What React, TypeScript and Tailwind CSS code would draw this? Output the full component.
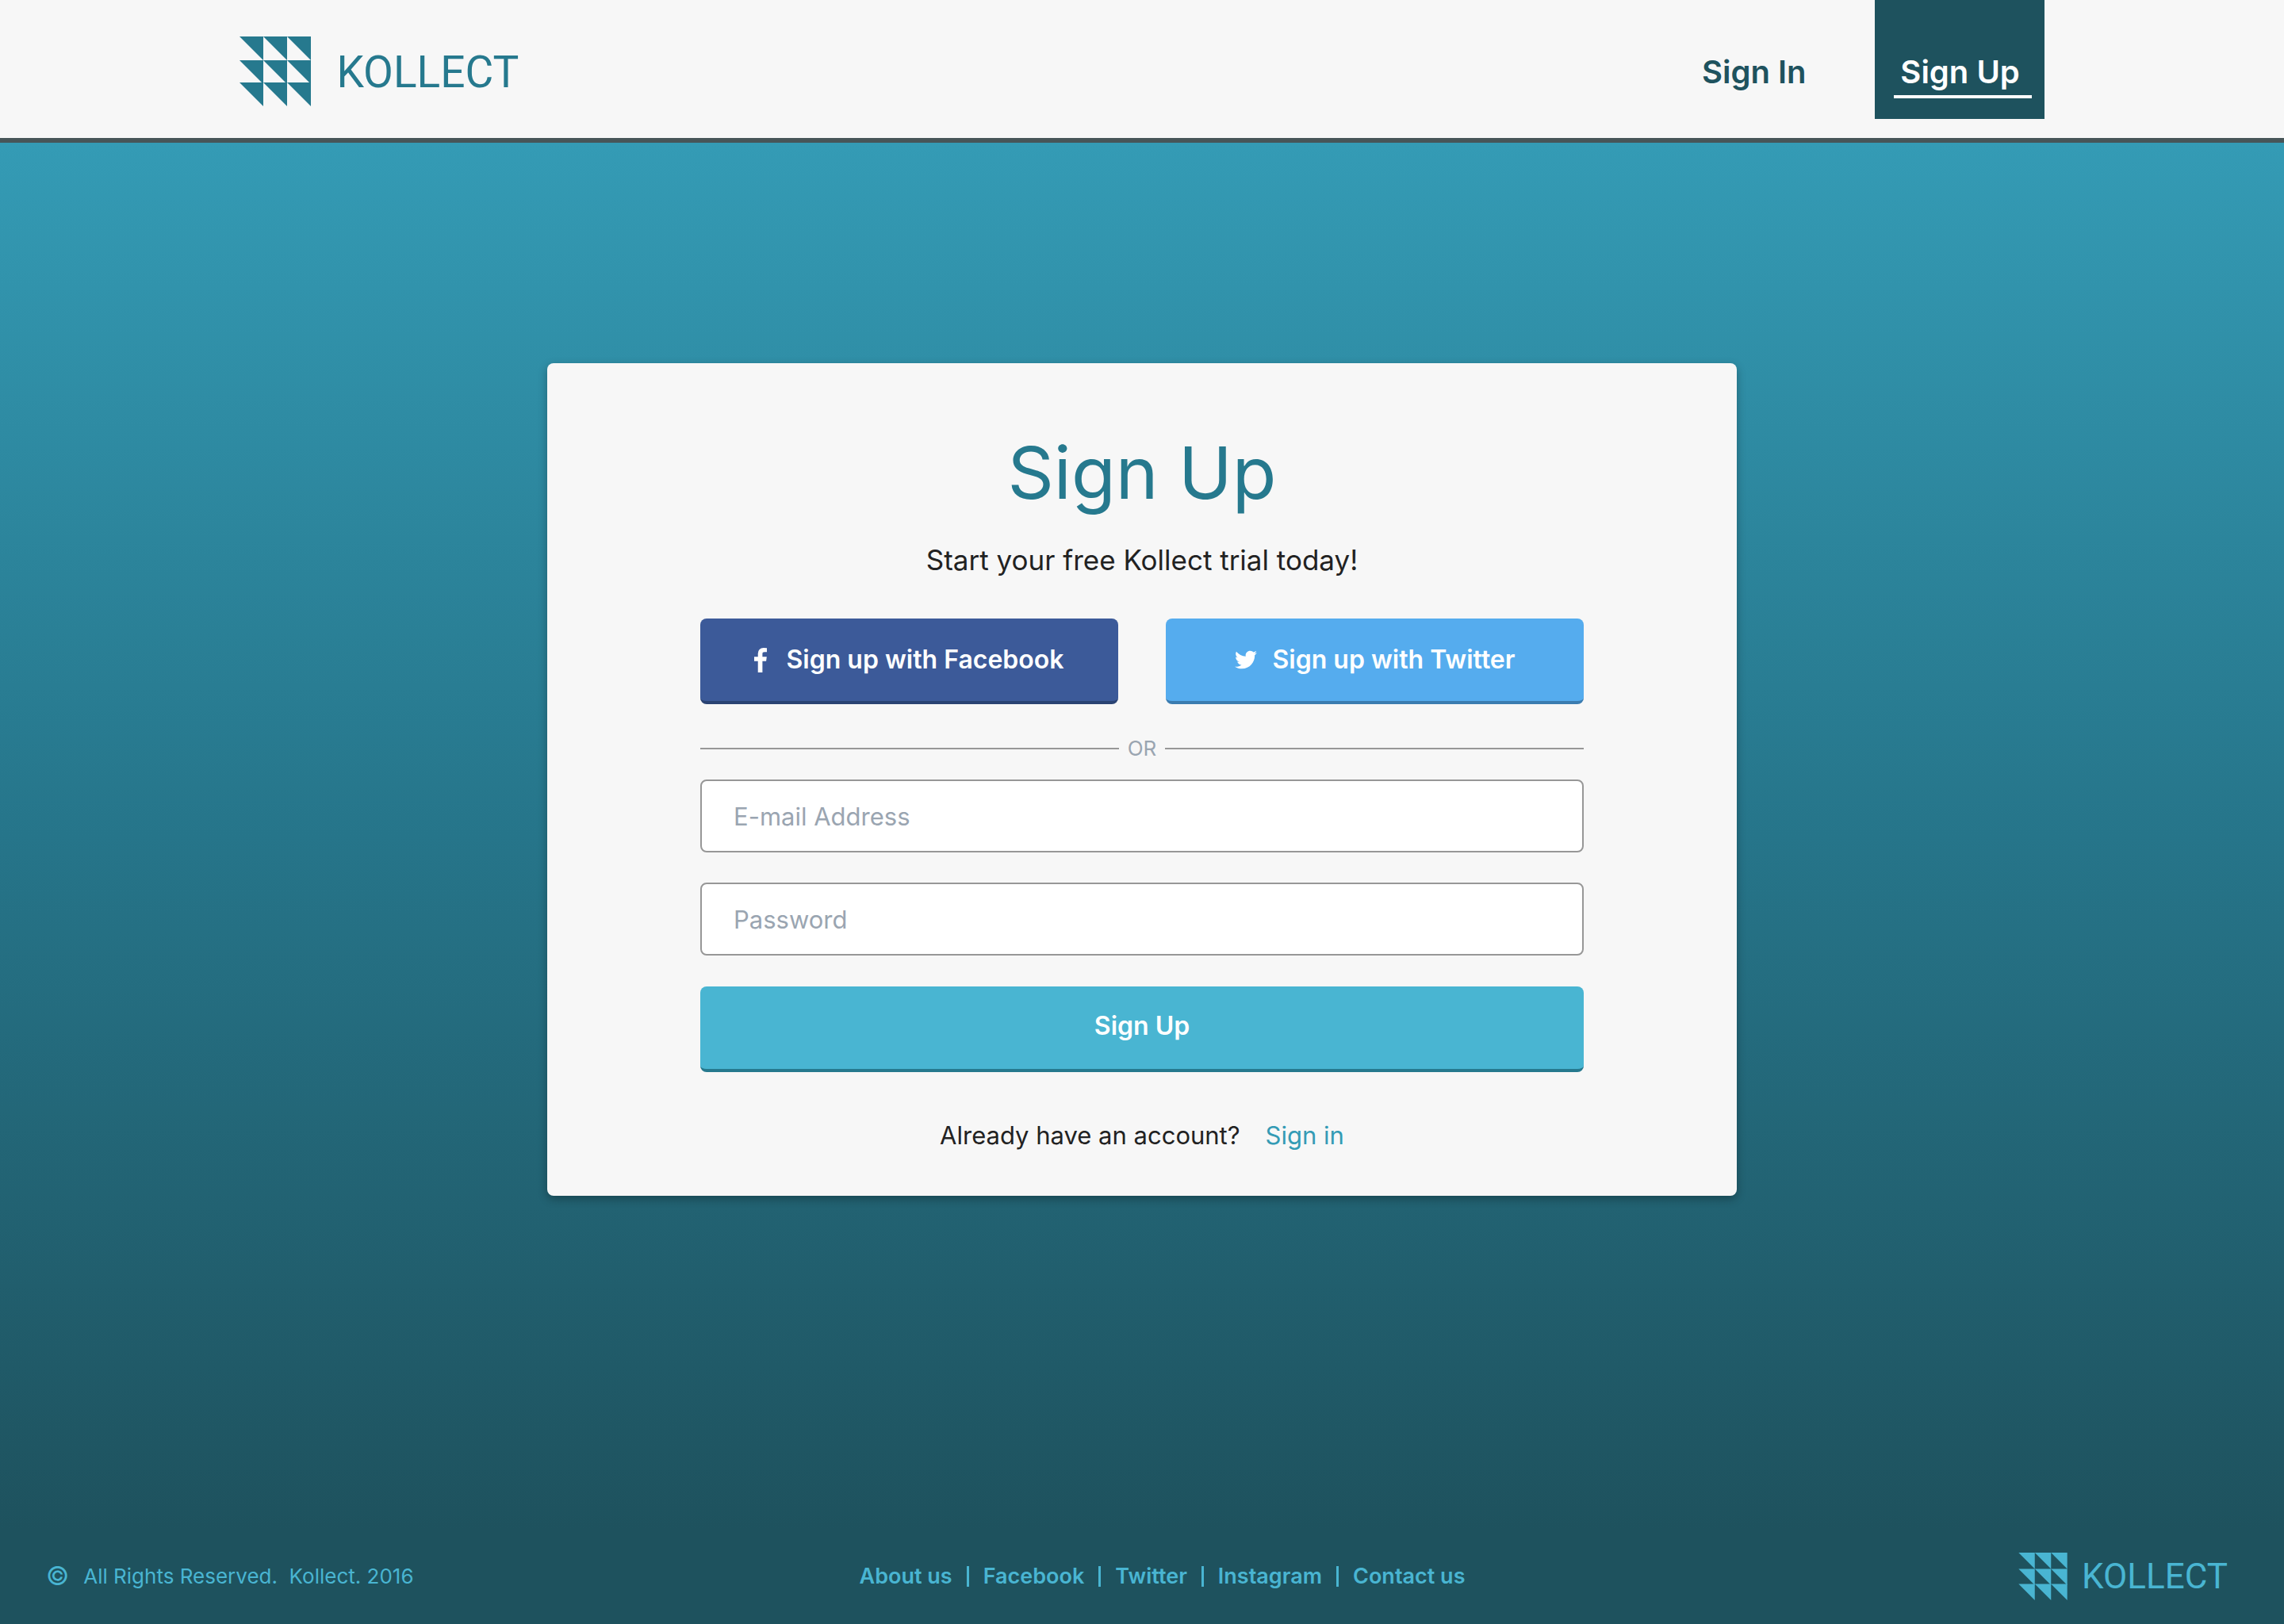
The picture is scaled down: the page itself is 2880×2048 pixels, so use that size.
import type { ReactNode } from "react";
import { FaTwitter } from "react-icons/fa";

const cells = [
  [0, 0], [30, 0], [60, 0],
  [0, 30], [30, 30], [60, 30],
  [0, 58], [30, 58], [60, 58],
];

function LogoMark({ className }: { className: string }) {
  return (
    <svg viewBox="0 0 90 88" className={className} fill="currentColor" aria-hidden="true">
      {cells.map(([x, y]) => (
        <path key={`${x}-${y}`} d={`M${x} ${y}h30v30z`} />
      ))}
    </svg>
  );
}

function FacebookIcon({ className }: { className: string }) {
  return (
    <svg viewBox="95 0 864 1664" className={className} fill="currentColor" aria-hidden="true">
      <path d="M959 12v264h-157q-86 0-116 36t-30 108v189h293l-39 296h-254v759h-306v-759h-255v-296h255v-218q0-186 104-288.5t277-102.5q147 0 228 12z" />
    </svg>
  );
}

function SocialButton({ className, children }: { className: string; children: ReactNode }) {
  return (
    <button
      type="button"
      className={`flex h-[108px] flex-1 items-center justify-center rounded-lg border-b-4 text-[32px] leading-10 font-semibold text-white ${className}`}
    >
      {children}
    </button>
  );
}

function Field({ type, label }: { type: string; label: string }) {
  return (
    <input
      type={type}
      aria-label={label}
      placeholder={label}
      className="block h-[92px] w-full rounded-lg border-2 border-[#979797] bg-white px-10 text-[31px] leading-10 text-[#222] placeholder:text-[#9aa5b1] placeholder:opacity-100"
    />
  );
}

const footerLinks = ["About us", "Facebook", "Twitter", "Instagram", "Contact us"];

export default function App() {
  return (
    <div className="flex min-h-screen flex-col bg-[#1e525e] font-['Inter','Liberation_Sans',sans-serif]">
      <header className="border-b-6 border-[#475558] bg-[#f7f7f7]">
        <div className="mx-auto flex h-[174px] w-[79%] items-start justify-between">
          <a href="#" className="flex items-center gap-8 pt-[46px] text-[#26798e]">
            <LogoMark className="h-[88px] w-[90px]" />
            <span className="pt-0.5 font-['Roboto',sans-serif] text-[55px] leading-[86px]">KOLLECT</span>
          </a>
          <nav className="flex items-start text-[40px] leading-12 font-semibold">
            <a href="#" className="mr-[86px] pt-[67px] text-[#1e525e]">Sign In</a>
            <a href="#" className="flex h-[150px] w-[214px] flex-col bg-[#1e525e] pt-[67px] pr-4 pl-6 text-white">
              <span className="border-b-4 border-white pr-1.5 pb-[5px] text-center">Sign Up</span>
            </a>
          </nav>
        </div>
      </header>

      <main className="flex flex-1 flex-col items-center bg-linear-to-b from-[#349bb5] via-[#26758a] to-[#1e525e] pt-[278px]">
        <section className="w-full max-w-[1500px] rounded-lg bg-[#f7f7f7] pt-[86px] pb-14 shadow-[0_4px_12px_rgba(0,0,0,0.3)]">
          <div className="mx-auto max-w-[1114px]">
            <h1 className="text-center text-[91px] leading-[104px] text-[#26798e]">Sign Up</h1>
            <p className="mt-[34px] text-center text-[35px] leading-12 text-[#222]">Start your free Kollect trial today!</p>

            <div className="mt-[50px] flex gap-15">
              <SocialButton className="border-[#2a4373] bg-[#3c5a99]">
                <FacebookIcon className="mr-6 h-[31px] w-4" />
                Sign up with Facebook
              </SocialButton>
              <SocialButton className="border-[#3b7cb0] bg-[#55acee]">
                <FaTwitter className="mr-5 size-7" aria-hidden="true" />
                Sign up with Twitter
              </SocialButton>
            </div>

            <div className="mt-10 flex items-center text-[26px] leading-8 text-[#9aa5b1]">
              <span className="h-0.5 flex-1 bg-[#979797]" />
              <span className="w-[58px] text-center">OR</span>
              <span className="h-0.5 flex-1 bg-[#979797]" />
            </div>

            <form className="mt-[23px] flex flex-col" onSubmit={(e) => e.preventDefault()}>
              <div className="flex flex-col gap-[38px]">
                <Field type="email" label="E-mail Address" />
                <Field type="password" label="Password" />
              </div>
              <button
                type="submit"
                className="mt-[39px] h-[108px] rounded-lg border-b-4 border-[#26798e] bg-[#49b5d2] pb-1 text-[32px] leading-10 font-semibold text-white"
              >
                Sign Up
              </button>
            </form>

            <p className="mt-[60px] flex justify-center gap-8 text-[31px] leading-10 text-[#222]">
              <span>Already have an account?</span>
              <a href="#" className="text-[#349bb5]">Sign in</a>
            </p>
          </div>
        </section>
      </main>

      <footer className="grid h-[120px] grid-cols-[1fr_auto_1fr] items-center bg-[#1e525e] pr-[71px] pl-[58px] text-[26px] leading-8 text-[#49b5d2]">
        <p className="flex items-center gap-[18px]">
          <span className="text-[32px]">©</span>
          <span className="whitespace-pre">All Rights Reserved.  Kollect. 2016</span>
        </p>
        <nav className="ml-16 flex items-center text-[27px] font-semibold">
          {footerLinks.map((label, i) => (
            <span key={label} className="flex items-center">
              {i > 0 && <span className="mx-[18px] h-[26px] w-[3px] bg-[#49b5d2]" />}
              <a href="#">{label}</a>
            </span>
          ))}
        </nav>
        <a href="#" className="flex items-center gap-[18px] justify-self-end">
          <LogoMark className="h-[60px] w-[62px]" />
          <span className="font-['Roboto',sans-serif] text-[44px] leading-[60px]">KOLLECT</span>
        </a>
      </footer>
    </div>
  );
}
